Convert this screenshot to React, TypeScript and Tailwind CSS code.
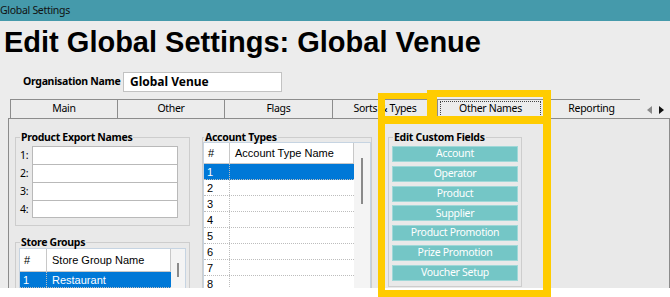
import React from 'react';

const ui = "font-['Noto_Sans','Open_Sans',sans-serif]";
const uiReg = `${ui} text-[10.5px] tracking-[-0.3px]`;
const uiBold = `${ui} text-[10.5px] font-bold tracking-[-0.3px]`;
const arial = "font-['Liberation_Sans',Arial,sans-serif]";

const tabs = [
  { label: 'Main', w: 'w-[107px]' },
  { label: 'Other', w: 'w-[107px]' },
  { label: 'Flags', w: 'w-[108px]' },
  { label: 'Sorts & Types', w: 'w-[105px]' },
  { label: 'Other Names', w: 'w-[106px]', focus: true },
  { label: 'Reporting', w: 'flex-1', last: true },
];

const customFields = ['Account', 'Operator', 'Product', 'Supplier', 'Product Promotion', 'Prize Promotion', 'Voucher Setup'];

function GroupBox({
  title,
  className,
  legendMl = 'ml-[4px]',
  children,
}: {
  title: string;
  className?: string;
  legendMl?: string;
  children: React.ReactNode;
}) {
  return (
    <fieldset className={`shrink-0 border border-[#cdcdcd] ${className ?? ''}`}>
      <legend className={`${uiBold} ${legendMl} px-[1px] leading-[14px] text-black`}>{title}</legend>
      {children}
    </fieldset>
  );
}

interface GridProps {
  colName: string;
  numW: string;
  nameW: string;
  headerH: string;
  rows: { n: string; name: string }[];
  thumbTop: string;
  thumbH: string;
}

function Grid({ colName, numW, nameW, headerH, rows, thumbTop, thumbH }: GridProps) {
  return (
    <div className={`flex border border-[#c6d4e2] bg-white ${arial} text-[11px] text-black`}>
      <div className="flex flex-col">
        <div className={`flex ${headerH}`}>
          <div className={`${numW} flex items-center pl-[4px] border-r border-b border-[#c8c8c8]`}>#</div>
          <div className={`${nameW} flex items-center pl-[5px] border-r border-b border-[#c8c8c8]`}>{colName}</div>
        </div>
        {rows.map((r, i) => (
          <div
            key={i}
            className={`flex h-[16px] leading-[16px] border-b border-dotted border-[#bdbdbd] ${i === 0 ? 'bg-[#0078d7] text-white' : ''}`}
          >
            <div className={`${numW} pl-[3px] border-r border-dotted border-[#bdbdbd]`}>{r.n}</div>
            <div className={`${nameW} pl-[5px]`}>{r.name}</div>
          </div>
        ))}
      </div>
      <div className="flex-1 flex justify-center bg-[#f4f4f4]">
        <div className={`w-[2px] ${thumbTop} ${thumbH} bg-[#8a8a8a]`} />
      </div>
    </div>
  );
}

export default function App() {
  return (
    <div className="relative w-[670px] h-[297px] bg-white overflow-hidden">
      <div className={`h-[21px] bg-[#459aab] flex items-center ${uiReg} text-[#111]`}>Global Settings</div>

      <div className="h-[267px] bg-[#ececec] flex flex-col overflow-hidden">
        <h1 className={`${arial} mt-[4px] ml-[4px] h-[34px] text-[29px] leading-[34px] font-bold text-black whitespace-nowrap`}>
          Edit Global Settings: Global Venue
        </h1>

        <div className="mt-[13px] flex items-center h-[20px]">
          <span className={`${uiBold} ml-[23px] w-[100px] whitespace-nowrap text-black`}>Organisation Name</span>
          <div className={`${ui} w-[159px] h-[20px] bg-white border border-[#c2c2c2] pl-[6px] flex items-center text-[12px] font-bold text-black`}>
            Global Venue
          </div>
        </div>

        <div className="mt-[7px] flex h-[19px]">
          <div className="ml-[10px] w-[630px] flex border-t border-[#8c8c8c]">
            {tabs.map((t) => (
              <div
                key={t.label}
                className={`${t.w} ${t.last ? '' : 'border-l'} border-[#8c8c8c] flex items-center justify-center ${uiReg} text-black`}
              >
                {t.focus ? (
                  <div className="w-[101px] h-[16px] border border-dotted border-[#444] flex items-center justify-center">{t.label}</div>
                ) : (
                  t.label
                )}
              </div>
            ))}
          </div>
          <div className="flex-1 flex items-center justify-center gap-[7px] pt-[2px]">
            <svg width="5" height="8" viewBox="0 0 5 8"><path d="M5 0 L0 4 L5 8 Z" fill="#8a8a8a" /></svg>
            <svg width="5" height="8" viewBox="0 0 5 8"><path d="M0 0 L5 4 L0 8 Z" fill="#111" /></svg>
          </div>
        </div>

        <div className="ml-[8px] w-[662px] flex-1 min-h-0 border-t border-l border-r border-[#8c8c8c] bg-[#e9e9e9] overflow-hidden flex pt-[11px] pl-[6px]">
          <div className="w-[175px] shrink-0 flex flex-col">
            <GroupBox title="Product Export Names" className="h-[96px]">
              <div className="px-[4px] pt-[2px]">
                {['1:', '2:', '3:', '4:'].map((n, i) => (
                  <div key={n} className="flex h-[18px]">
                    <span className={`${uiReg} w-[12px] leading-[18px] text-black`}>{n}</span>
                    <div className={`w-[146px] bg-white border-x border-t border-[#b9b9b9] ${i === 3 ? 'border-b' : ''}`} />
                  </div>
                ))}
              </div>
            </GroupBox>
            <GroupBox title="Store Groups" className="mt-[9px] h-[60px]">
              <div className="-mt-px px-[3px]">
                <Grid
                  colName="Store Group Name"
                  numW="w-[27px]"
                  nameW="w-[124px]"
                  headerH="h-[23px]"
                  rows={[{ n: '1', name: 'Restaurant' }]}
                  thumbTop="mt-[14px]"
                  thumbH="h-[14px]"
                />
              </div>
            </GroupBox>
          </div>

          <GroupBox title="Account Types" legendMl="ml-[1px]" className="ml-[12px] w-[170px] h-[170px]">
            <div className="-mt-[2px]">
              <Grid
                colName="Account Type Name"
                numW="w-[26px]"
                nameW="w-[124px]"
                headerH="h-[21px]"
                rows={['1', '2', '3', '4', '5', '6', '7', '8'].map((n) => ({ n, name: '' }))}
                thumbTop="mt-[15px]"
                thumbH="h-[46px]"
              />
            </div>
          </GroupBox>

          <GroupBox title="Edit Custom Fields" className="ml-[16px] w-[134px] h-[157px]">
            <div className="flex flex-col gap-[3.8px] px-[3px] pt-[2px]">
              {customFields.map((f) => (
                <div
                  key={f}
                  className={`h-[16px] bg-[#74c6c6] border border-[#9fd8d8] flex items-center justify-center ${uiReg} text-white`}
                >
                  {f}
                </div>
              ))}
            </div>
          </GroupBox>
        </div>
      </div>

      {/* yellow highlight annotation */}
      <div className="absolute left-[378px] top-[93px] w-[7px] h-[204px] bg-[#ffcc00]" />
      <div className="absolute left-[378px] top-[93px] w-[55px] h-[6px] bg-[#ffcc00]" />
      <div className="absolute left-[427px] top-[90px] w-[124px] h-[7px] bg-[#ffcc00]" />
      <div className="absolute left-[427px] top-[90px] w-[10px] h-[34px] bg-[#ffcc00]" />
      <div className="absolute left-[378px] top-[116px] w-[173px] h-[8px] bg-[#ffcc00]" />
      <div className="absolute left-[543px] top-[90px] w-[8px] h-[207px] bg-[#ffcc00]" />
      <div className="absolute left-[378px] top-[290px] w-[173px] h-[7px] bg-[#ffcc00]" />
    </div>
  );
}
